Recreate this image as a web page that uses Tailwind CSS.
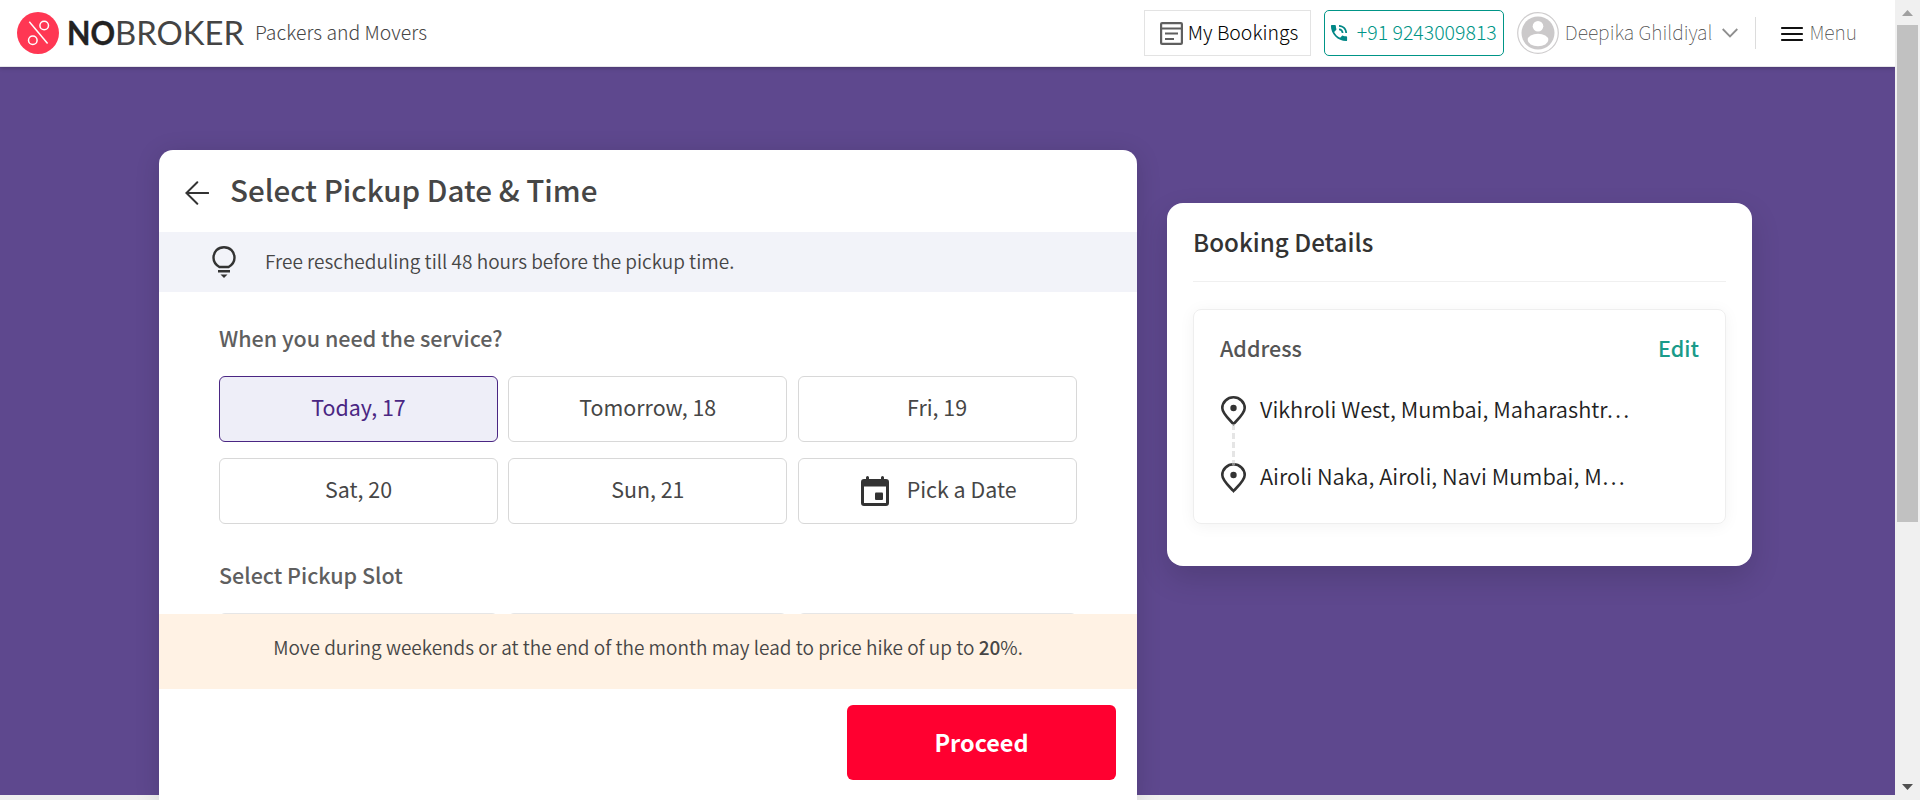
<!DOCTYPE html>
<html lang="en">
<head>
<meta charset="utf-8">
<title>Packers and Movers</title>
<script src="https://cdn.jsdelivr.net/npm/@tailwindcss/browser@4"></script>
</head>
<body class="h-[800px] overflow-hidden bg-[#f0f0f0] font-['Noto_Sans_CJK_SC',sans-serif] text-[#464646]">
<div class="flex h-[800px] w-[1920px]">
  <div class="flex h-[800px] w-[1895px] flex-col overflow-hidden">
    <header class="z-10 flex h-[67px] shrink-0 items-center border-b border-[#e6e6ea] bg-white pl-[17px] shadow-[0_1px_4px_rgba(0,0,0,0.25)]">
      <svg class="h-[42px] w-[42px]" viewBox="0 0 42 42" fill="none"><circle cx="21" cy="21" r="21" fill="#ff3753"/><g stroke="#fff" stroke-width="1.5"><path d="M12.3 9.8 30.6 31.5"/><circle cx="27.2" cy="13.5" r="4.3"/><circle cx="15.8" cy="28.2" r="4.3"/></g></svg>
      <svg class="ml-2 h-[42px] w-[180px]" viewBox="0 0 180 42"><text x="0" y="32.5" font-family="Lato" font-size="32" font-weight="700" fill="#222" stroke="#222" stroke-width=".4" textLength="48" lengthAdjust="spacingAndGlyphs">NO</text><text x="48" y="32.5" font-family="Lato" font-size="32" fill="#444" textLength="129" lengthAdjust="spacingAndGlyphs">BROKER</text></svg>
      <span class="-mt-0.5 ml-2 text-[19.4px] font-light leading-6">Packers and Movers</span>
      <div class="ml-auto flex items-center pr-[38px]">
        <div class="flex h-[46px] w-[167px] items-center border border-[#e3e3e3] pl-[15px]">
          <svg class="h-[23px] w-[23px]" viewBox="0 0 23 23" fill="none" stroke="#5f5f5f" stroke-width="2.2"><rect x="1.1" y="1.1" width="20.8" height="20.8" rx="1"/><path d="M1 6.500H22M5 11.500H18M5 17H14" /></svg>
          <span class="-mt-0.5 ml-[5px] whitespace-nowrap text-[19.4px] font-light leading-6 text-black">My Bookings</span>
        </div>
        <div class="ml-[13px] flex h-[46px] w-[180px] items-center rounded-[5px] border border-[#009587] pl-[5px]">
          <svg class="h-[18px] w-[18px] shrink-0" viewBox="2 2 20 20" fill="#018786"><path d="M20 15.5c-1.25 0-2.45-.2-3.57-.57-.1-.03-.21-.05-.31-.05-.26 0-.51.1-.71.29l-2.2 2.2c-2.83-1.44-5.15-3.75-6.59-6.58l2.2-2.21c.28-.27.36-.66.25-1.01C8.7 6.45 8.5 5.25 8.5 4c0-.55-.45-1-1-1H4c-.55 0-1 .45-1 1 0 9.39 7.61 17 17 17 .55 0 1-.45 1-1v-3.5c0-.55-.45-1-1-1zM19 12h2c0-4.97-4.03-9-9-9v2c3.87 0 7 3.13 7 7zm-4 0h2c0-2.76-2.24-5-5-5v2c1.66 0 3 1.34 3 3z"/></svg>
          <span class="-mt-0.5 ml-[9px] whitespace-nowrap text-[19.5px] font-light leading-6 text-[#009587]">+91 9243009813</span>
        </div>
        <svg class="ml-[13px] h-[42px] w-[42px]" viewBox="0 0 42 42"><circle cx="21" cy="21" r="20.3" fill="#fff" stroke="#cfcdce" stroke-width="1.2"/><circle cx="21" cy="21" r="16.5" fill="#cbc9ca"/><circle cx="21" cy="14.3" r="5.3" fill="#fff"/><ellipse cx="21" cy="28" rx="10.3" ry="6.2" fill="#fff"/></svg>
        <span class="-mt-0.5 ml-1.5 text-[19.4px] font-thin leading-6">Deepika Ghildiyal</span>
        <svg class="ml-[10px] h-[10px] w-4" viewBox="0 0 16 10" fill="none" stroke="#8f8f8f" stroke-width="1.8"><path d="M.7 1 8 8.4 15.3 1"/></svg>
        <div class="ml-[17px] h-8 w-px bg-[#dcdcdc]"></div>
        <svg class="ml-[25px] mt-[2px] h-4 w-[22px]" viewBox="0 0 22 16" stroke="#111" stroke-width="1.8" stroke-linecap="round"><path d="M.8 2H21.2M.8 8H21.2M.8 14H21.2"/></svg>
        <span class="-mt-0.5 ml-[6px] text-[19.4px] font-thin leading-6">Menu</span>
      </div>
    </header>
    <main class="flex h-[728px] shrink-0 items-start bg-[#5e488e] pl-[159px]">
      <section class="mt-[83px] flex h-[650px] w-[978px] shrink-0 flex-col rounded-t-[14px] bg-white shadow-[0_4px_24px_rgba(0,0,0,0.15)]">
        <div class="flex h-[82px] items-center pl-[26px]">
          <svg class="mt-1 h-6 w-6" viewBox="0 0 24 24" fill="none" stroke="#333" stroke-width="2" stroke-linecap="round"><path d="M12.3 1.2 1.4 12l10.9 10.8M1.4 12H23.3"/></svg>
          <h1 class="-mt-0.5 ml-[21px] text-[29.6px] font-medium leading-10">Select Pickup Date &amp; Time</h1>
        </div>
        <div class="flex h-[60px] items-center bg-[#f2f3f9] pl-[53px]">
          <svg class="h-8 w-6" viewBox="0 0 24 32" fill="none" stroke="#333" stroke-width="2.4"><path d="M7.4 21C3.6 18.8 1.5 15.6 1.5 11.8 1.5 5.6 6 1.2 12 1.2s10.5 4.4 10.5 10.6c0 3.800-2.100 7-5.900 9.200zM6 25.300H18"/><path d="M8.500 28.500h7L12 32z" fill="#333" stroke="none"/></svg>
          <span class="-mt-0.5 ml-[29px] text-[19px] font-[350] leading-6">Free rescheduling till 48 hours before the pickup time.</span>
        </div>
        <div class="flex h-[322px] flex-col overflow-hidden px-[60px] pt-[30px]">
          <h2 class="h-8 self-start text-[21.5px] font-medium leading-8 text-[#5f5f5f]">When you need the service?</h2>
          <div class="mt-[22px] grid grid-cols-[279px_279px_279px] gap-x-[10.3px] gap-y-4 text-[21.4px]">
            <div class="flex h-[66px] items-center justify-center rounded-md border border-[#4a2683] bg-[#eeeef8] pb-[3px] text-[#4a2683]">Today, 17</div>
            <div class="flex h-[66px] items-center justify-center rounded-md border border-[#d8d8d8] pb-[3px]">Tomorrow, 18</div>
            <div class="flex h-[66px] items-center justify-center rounded-md border border-[#d8d8d8] pb-[3px]">Fri, 19</div>
            <div class="flex h-[66px] items-center justify-center rounded-md border border-[#d8d8d8] pb-[3px]">Sat, 20</div>
            <div class="flex h-[66px] items-center justify-center rounded-md border border-[#d8d8d8] pb-[3px]">Sun, 21</div>
            <div class="flex h-[66px] items-center justify-center gap-[18px] rounded-md border border-[#d8d8d8] pl-[3px]">
              <svg class="h-[30px] w-7" viewBox="0 0 28 30"><path fill="#333" fill-rule="evenodd" d="M5 3V1.500a1.500 1.500 0 0 1 3 0V3H20V1.500a1.500 1.500 0 0 1 3 0V3h2a3 3 0 0 1 3 3V27a3 3 0 0 1-3 3H3a3 3 0 0 1-3-3V6a3 3 0 0 1 3-3h2zM3 10.500V27H25V10.500z"/><rect x="14" y="16.500" width="8" height="7.500" rx="1" fill="#333"/></svg>
              <span class="-mt-[3px]">Pick a Date</span>
            </div>
          </div>
          <h2 class="mt-[35px] h-8 shrink-0 self-start text-[21.500px] font-medium leading-8 text-[#5f5f5f]">Select Pickup Slot</h2>
          <div class="mt-[22px] grid shrink-0 grid-cols-[279px_279px_279px] gap-x-[10.3px]">
            <div class="h-[66px] rounded-md border border-[#e6e6e6]"></div>
            <div class="h-[66px] rounded-md border border-[#e6e6e6]"></div>
            <div class="h-[66px] rounded-md border border-[#e6e6e6]"></div>
          </div>
        </div>
        <p class="flex h-[75px] items-center justify-center bg-[#fff2e4] pb-2.5 text-[19px] font-[350] leading-6"><span>Move during weekends or at the end of the month may lead to price hike of up to <b class="font-medium">20</b>%.</span></p>
        <div class="flex justify-end pr-[21px] pt-4"><button class="h-[75px] w-[269px] rounded-md bg-[#ff0030] text-[23.400px] font-bold text-white">Proceed</button></div>
      </section>
      <aside class="ml-[30px] mt-[136px] h-[363px] w-[585px] rounded-2xl bg-white px-[26px] shadow-[0_12px_30px_rgba(0,0,0,0.14)]">
        <h2 class="h-[79px] border-b border-[#f0f0f0] pt-[23px] text-[24.200px] font-medium leading-8 text-[#333]">Booking Details</h2>
        <div class="mt-[27px] h-[215px] rounded-lg border border-[#eee] px-[26px] pt-[22px] shadow-[0_2px_16px_rgba(0,0,0,0.05)]">
          <div class="flex justify-between text-[21.500px] font-medium leading-8 text-[#555]"><span>Address</span><span class="text-[#1a9b8a]">Edit</span></div>
          <div class="mt-[31px] flex h-8 items-center text-[21.800px] font-[350] text-[#222]">
            <svg class="mr-[14px] h-[30px] w-[26px]" viewBox="0 0 26 30" fill="none" stroke="#333" stroke-width="2.600"><path d="M13.500 28C8.500 22.500 2.300 17.500 2.300 12a11.200 10.700 0 0 1 22.400 0C24.700 17.500 18.500 22.500 13.500 28z"/><circle cx="13.500" cy="12" r="3.200" fill="#333" stroke="none"/></svg>
            <span class="-mt-[3px]">Vikhroli West, Mumbai, Maharashtr…</span>
          </div>
          <div class="relative mt-[35px] flex h-8 items-center text-[21.800px] font-[350] text-[#222]">
            <svg class="mr-[14px] h-[30px] w-[26px]" viewBox="0 0 26 30" fill="none" stroke="#333" stroke-width="2.600"><path d="M13.500 28C8.500 22.500 2.300 17.500 2.300 12a11.200 10.700 0 0 1 22.400 0C24.700 17.500 18.500 22.500 13.500 28z"/><circle cx="13.500" cy="12" r="3.200" fill="#333" stroke="none"/></svg>
            <span class="-mt-[3px]">Airoli Naka, Airoli, Navi Mumbai, M…</span>
            <svg class="absolute -top-[38px] left-3 h-[41px] w-[3px]" viewBox="0 0 3 41"><path d="M1.500 0V41" stroke="#cfcfcf" stroke-opacity=".55" stroke-width="3" stroke-dasharray="6 3"/></svg>
          </div>
        </div>
      </aside>
    </main>
  </div>
  <div class="flex h-[800px] w-[25px] flex-col items-center bg-[#f0f0f0]">
    <svg class="h-[25px] w-[25px] shrink-0" viewBox="0 0 25 25"><path d="M7 16 12.500 10 18 16z" fill="#a0a0a0"/></svg>
    <div class="h-[497px] w-[21px] bg-[#c1c1c1]"></div>
    <svg class="mt-auto h-[25px] w-[25px] shrink-0" viewBox="0 0 25 25"><path d="M7 9 12.500 15 18 9z" fill="#505050"/></svg>
  </div>
</div>
</body>
</html>
